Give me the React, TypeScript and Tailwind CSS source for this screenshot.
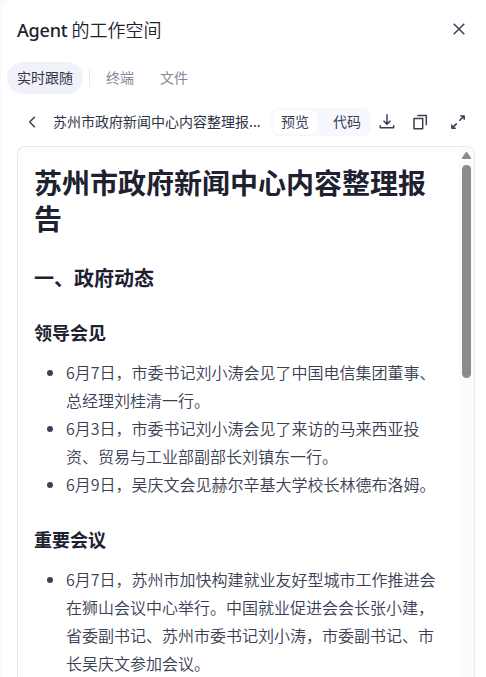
import React, { useState } from 'react';

interface Section {
    title: string;
    items: string[];
}

const SECTIONS: Section[] = [
    {
        title: '领导会见',
        items: [
            '6月7日，市委书记刘小涛会见了中国电信集团董事、总经理刘桂清一行。',
            '6月3日，市委书记刘小涛会见了来访的马来西亚投资、贸易与工业部副部长刘镇东一行。',
            '6月9日，吴庆文会见赫尔辛基大学校长林德布洛姆。',
        ],
    },
    {
        title: '重要会议',
        items: [
            '6月7日，苏州市加快构建就业友好型城市工作推进会在狮山会议中心举行。中国就业促进会会长张小建，省委副书记、苏州市委书记刘小涛，市委副书记、市长吴庆文参加会议。',
        ],
    },
];

const Icon: React.FC<{ children: React.ReactNode }> = ({ children }) => (
    <svg
        width={16}
        height={16}
        viewBox="0 0 16 16"
        fill="none"
        stroke="currentColor"
        strokeWidth={1.5}
        strokeLinejoin="round"
        className="block shrink-0"
    >
        {children}
    </svg>
);

const Header = () => (
    <header className="flex h-[60px] shrink-0 items-center justify-between pr-[19px] pb-1.5 pl-4">
        <h1 className="text-[18px] leading-7 text-[#1d2130]">
            <span className="font-['Noto_Sans','Noto_Sans_CJK_SC',sans-serif] font-medium tracking-[-0.2px]">Agent</span>{' '}
            <span className="font-[350]">的工作空间</span>
        </h1>
        <button className="text-[#3a4054]">
            <Icon>
                <path d="M2.7 2.7l10.6 10.6M13.3 2.7L2.7 13.3" />
            </Icon>
        </button>
    </header>
);

const Tabs = () => {
    const [active, setActive] = useState('实时跟随');

    const tabClass = (name: string) =>
        active === name ? 'bg-[#f1f1f9] text-[#2f3547]' : 'text-[#83879a]';

    return (
        <nav className="ml-1.5 flex h-8 shrink-0 items-center text-sm">
            <button onClick={() => setActive('实时跟随')} className={`h-8 rounded-full px-2.5 pb-0.5 ${tabClass('实时跟随')}`}>
                实时跟随
            </button>
            <span className="mx-1.5 h-[17px] w-px bg-[#e7e8f0]" />
            {['终端', '文件'].map((name) => (
                <button key={name} onClick={() => setActive(name)} className={`mr-1.5 h-8 rounded-full px-2.5 pb-0.5 ${tabClass(name)}`}>
                    {name}
                </button>
            ))}
        </nav>
    );
};

const Toolbar = () => (
    <div className="mt-3.5 flex h-7 shrink-0 items-center pr-5 pl-[23px] text-sm text-[#3a4054]">
        <Icon>
            <path d="M10.8 2.8L5.7 8l5.1 5.2" />
        </Icon>
        <span className="ml-[13px] w-[206px] shrink-0 pb-0.5 whitespace-nowrap text-[#2f3547]">苏州市政府新闻中心内容整理报...</span>
        <div className="ml-3 flex h-7 w-[100px] shrink-0 items-center rounded-lg bg-[#f7f7fd] p-0.5">
            <button className="h-6 w-11 rounded-md bg-white pb-0.5">预览</button>
            <button className="h-6 flex-1 pb-0.5 pl-2">代码</button>
        </div>
        <div className="ml-2 flex flex-1 items-center">
            <Icon>
                <path d="M8 .3v9.8M4.5 6.7L8 10.2l3.5-3.5M1.3 11.3v2.4h13.4v-2.4" />
            </Icon>
            <span className="ml-[17px]">
                <Icon>
                    <path d="M2 4.5h8.7v10.2H2zM5.4 1.6h8.9v9.6" />
                </Icon>
            </span>
            <span className="ml-auto">
                <Icon>
                    <path d="M10.3 1.9h3.9v3.9M14 2.1L9.3 6.8M5.8 14.3H1.9v-3.9M2.1 14.1l4.7-4.7" />
                </Icon>
            </span>
        </div>
    </div>
);

const Scrollbar = () => (
    <div className="flex w-[15px] shrink-0 flex-col items-center bg-[#fbfbfb]">
        <svg width={9} height={7} viewBox="0 0 9 7" className="mt-[5px] block" fill="#8b8b8b">
            <path d="M3.7.5Q4.5-.4 5.3.5L8.8 5.4Q9.3 7 8 7H1Q-.3 7 .2 5.4z" />
        </svg>
        <div className="mt-1.5 h-[213px] w-[9px] rounded-full bg-[#8b8b8b]" />
    </div>
);

const Report = () => (
    <article className="min-w-0 flex-1 px-4 pt-[17px] text-[#1d2130]">
        <h1 className="text-[28px] leading-9 font-bold">苏州市政府新闻中心内容整理报告</h1>
        <h2 className="mt-7 text-xl leading-7 font-bold">一、政府动态</h2>
        {SECTIONS.map((section) => (
            <section key={section.title} className="mt-[27px]">
                <h3 className="text-lg leading-[26px] font-bold">{section.title}</h3>
                <ul className="mt-[13px] mb-7 list-disc pl-8 text-base leading-7 font-[350] text-[#3a4054]">
                    {section.items.map((item) => (
                        <li key={item}>{item}</li>
                    ))}
                </ul>
            </section>
        ))}
    </article>
);

export default function App() {
    return (
        <div className="h-[677px] w-[486px] overflow-hidden bg-[#f7f7fd] pl-px font-['Noto_Sans_CJK_SC',sans-serif]">
            <div className="flex h-full flex-col rounded-tl-xl bg-white pt-0.5">
                <Header />
                <Tabs />
                <Toolbar />
                <div className="mt-2.5 mr-[11px] ml-4 flex min-h-0 flex-1 overflow-hidden rounded-t-lg border border-b-0 border-[#e7e8f0]">
                    <Report />
                    <Scrollbar />
                </div>
            </div>
        </div>
    );
}
